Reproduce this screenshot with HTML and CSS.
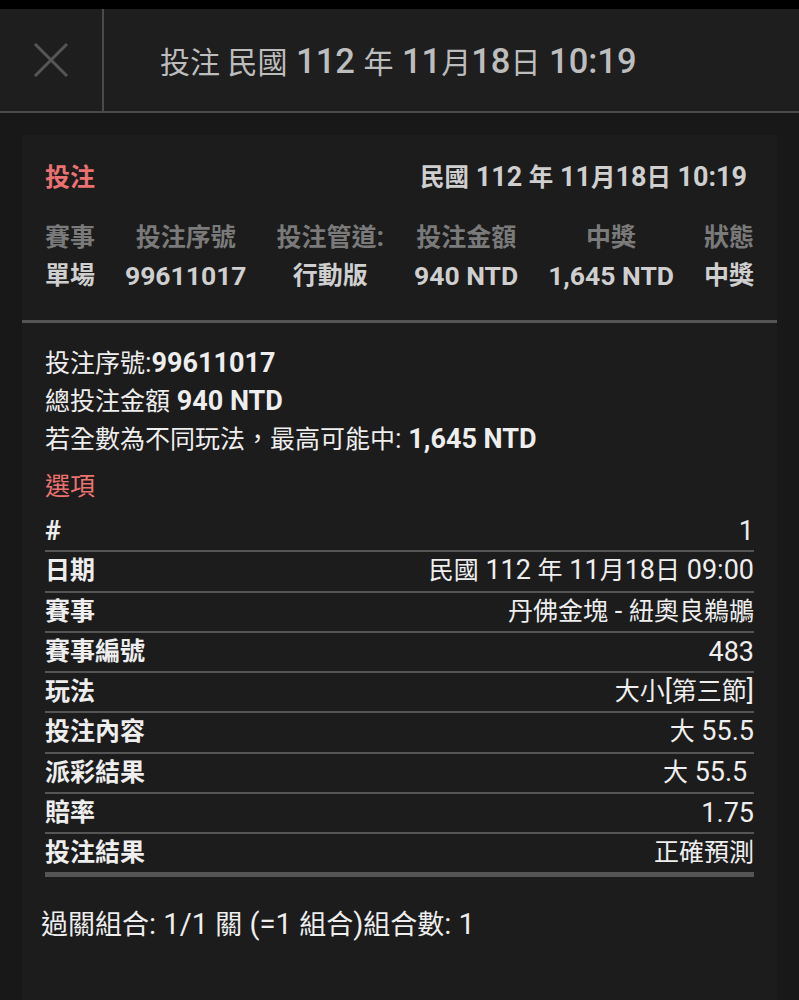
FILE: index.html
```html
<html><head>
    <meta charset="UTF-8">
    <meta name="viewport" content="width=device-width, initial-scale=1.0">
    <title>投注 紀錄</title>
    <link rel="stylesheet" href="styles.css">
    </head>
    <body>
        <div class="top-bar">
            <div class="close-cell">
                <svg class="close-icon" width="36" height="36" viewBox="0 0 36 36">
                    <path d="M2 2 L34 34 M34 2 L2 34" stroke="#565656" stroke-width="3" fill="none"/>
                </svg>
            </div>
            <div class="top-title">投注 民國<span class="lat"> 112 </span>年<span class="lat"> 11</span>月<span class="lat">18</span>日<span class="lat"> 10:19</span></div>
        </div>

        <div class="bet-card">
            <div class="bet-summary">
                <div class="summary-head">
                    <span class="accent-title">投注</span>
                    <span class="summary-date">民國<span class="lat"> 112 </span>年<span class="lat"> 11</span>月<span class="lat">18</span>日<span class="lat"> 10:19</span></span>
                </div>
                <div class="summary-grid">
                    <span class="grid-label">賽事</span>
                    <span class="grid-label">投注序號</span>
                    <span class="grid-label">投注管道<span class="lat">:</span></span>
                    <span class="grid-label">投注金額</span>
                    <span class="grid-label">中獎</span>
                    <span class="grid-label">狀態</span>
                    <span class="grid-value">單場</span>
                    <span class="grid-value lat">99611017</span>
                    <span class="grid-value">行動版</span>
                    <span class="grid-value lat">940 NTD</span>
                    <span class="grid-value lat">1,645 NTD</span>
                    <span class="grid-value">中獎</span>
                </div>
            </div>

            <div class="bet-detail">
                <p class="detail-line">投注序號<span class="lat">:<b>99611017</b></span></p>
                <p class="detail-line">總投注金額<span class="lat"> <b>940 NTD</b></span></p>
                <p class="detail-line">若全數為不同玩法，最高可能中<span class="lat">: <b>1,645 NTD</b></span></p>
                <h3 class="accent-title options-title">選項</h3>

                <div class="option-table">
                    <div class="option-row"><span class="option-label lat">#</span><span class="option-value lat">1</span></div>
                    <div class="option-row"><span class="option-label">日期</span><span class="option-value">民國<span class="lat"> 112 </span>年<span class="lat"> 11</span>月<span class="lat">18</span>日<span class="lat"> 09:00</span></span></div>
                    <div class="option-row"><span class="option-label">賽事</span><span class="option-value">丹佛金塊<span class="lat"> - </span>紐奧良鵜鶘</span></div>
                    <div class="option-row"><span class="option-label">賽事編號</span><span class="option-value lat">483</span></div>
                    <div class="option-row"><span class="option-label">玩法</span><span class="option-value">大小<span class="lat">[</span>第三節<span class="lat">]</span></span></div>
                    <div class="option-row"><span class="option-label">投注內容</span><span class="option-value">大<span class="lat"> 55.5</span></span></div>
                    <div class="option-row"><span class="option-label">派彩結果</span><span class="option-value">大<span class="lat"> 55.5&nbsp;</span></span></div>
                    <div class="option-row"><span class="option-label">賠率</span><span class="option-value lat">1.75</span></div>
                    <div class="option-row last"><span class="option-label">投注結果</span><span class="option-value">正確預測</span></div>
                </div>

                <p class="combo-line">過關組合<span class="lat">: 1/1 </span>關<span class="lat"> (=1 </span>組合<span class="lat">)</span>組合數<span class="lat">: 1</span></p>
            </div>
        </div>
    </body>
    </html>
```

FILE: styles.css
```css
:root {
    /* Main color palette */
    --color-page: #181818;
    --color-card: #1c1c1c;
    --color-bar: #1e1e1e;
    --color-line: #4a4a4a;
    --color-accent: #ec7272;
    --color-text: #eeeeee;
    --color-text-soft: #cfcfcf;
    --color-text-muted: #7a7a7a;
}

body {
    font-family: Roboto, "Noto Sans CJK TC", sans-serif;
    margin: 0;
    padding: 0;
    min-height: 100vh;
    background-color: var(--color-page);
    color: var(--color-text);
}

/* latin runs render a bit larger than the CJK glyphs around them */
.lat {
    font-size: 1.08em;
    line-height: 1;
}

.top-bar {
    display: flex;
    height: 102px;
    border-top: 9px solid #000;
    border-bottom: 2px solid var(--color-line);
    background-color: var(--color-bar);
}

.close-cell {
    width: 102px;
    border-right: 2px solid var(--color-line);
    display: flex;
    justify-content: center;
    align-items: center;
}

.top-title {
    display: flex;
    align-items: baseline;
    align-self: center;
    padding-left: 56px;
    font-size: 30px;
    color: #bdbdbd;
    white-space: pre;
}

.top-title .lat {
    font-size: 1.15em;
    font-weight: 500;
}

.bet-card {
    margin: 22px 22px 0;
    background-color: var(--color-card);
    min-height: 865px;
}

.bet-summary {
    padding: 26px 23px 25px;
    border-bottom: 3px solid #555;
}

.summary-head {
    display: flex;
    justify-content: space-between;
    align-items: center;
    line-height: 34px;
}

.accent-title {
    color: var(--color-accent);
    font-size: 25px;
    font-weight: 700;
}

.summary-date {
    font-size: 24.5px;
    font-weight: 700;
    color: var(--color-text-soft);
    margin-right: 7px;
    white-space: pre;
}

.summary-date .lat {
    font-size: 1.1em;
}

.summary-grid {
    display: grid;
    grid-template-columns: repeat(6, auto);
    justify-content: space-between;
    justify-items: center;
    margin-top: 24px;
    font-size: 25px;
    font-weight: 700;
}

.grid-label {
    color: var(--color-text-muted);
    line-height: 37px;
}

.grid-value {
    color: var(--color-text-soft);
    line-height: 39px;
}

.grid-value.lat {
    font-size: 26.5px;
}

.bet-detail {
    padding: 22px 23px 0;
}

.detail-line {
    margin: 0;
    font-size: 25px;
    line-height: 38px;
    white-space: pre;
}

.detail-line b {
    font-weight: 700;
}

.options-title {
    margin: 9px 0 0;
    line-height: 38px;
    font-weight: 400;
}

.option-table {
    margin-top: 6px;
}

.option-row {
    display: flex;
    justify-content: space-between;
    align-items: center;
    height: 38.25px;
    border-bottom: 2px solid #555;
    font-size: 25px;
}

.option-row > span {
    line-height: 34px;
}

.option-row.last {
    border-bottom: 5px solid #555;
}

.option-label {
    font-weight: 700;
}

.option-value {
    white-space: pre;
}

.combo-line {
    margin: 28px 0 0 -4px;
    font-size: 27px;
    line-height: 40px;
    white-space: pre;
}
```
